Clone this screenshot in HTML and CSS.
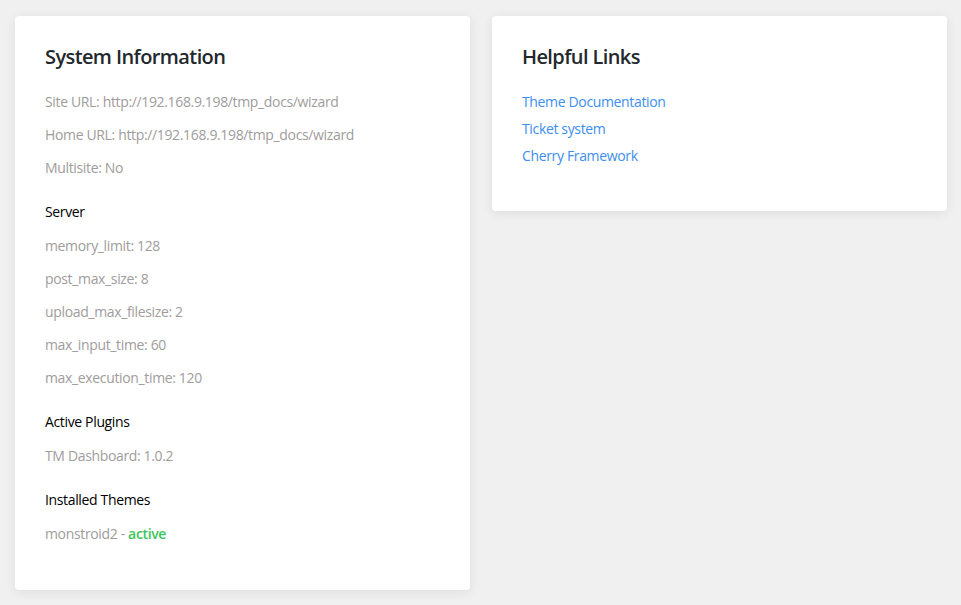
FILE: index.html
```html
<!DOCTYPE html>
<html>
<head>
<meta charset="utf-8">
<link rel="stylesheet" href="styles.css">
</head>
<body>
<div class="wrap">
  <section class="card">
    <h2 class="title">System Information</h2>
    <p class="item">Site URL: http://192.168.9.198/tmp_docs/wizard</p>
    <p class="item">Home URL: http://192.168.9.198/tmp_docs/wizard</p>
    <p class="item">Multisite: No</p>
    <h3 class="sub">Server</h3>
    <p class="item">memory_limit: 128</p>
    <p class="item">post_max_size: 8</p>
    <p class="item">upload_max_filesize: 2</p>
    <p class="item">max_input_time: 60</p>
    <p class="item">max_execution_time: 120</p>
    <h3 class="sub">Active Plugins</h3>
    <p class="item">TM Dashboard: 1.0.2</p>
    <h3 class="sub">Installed Themes</h3>
    <p class="item">monstroid2 - <span class="active">active</span></p>
  </section>
  <section class="card card-links">
    <h2 class="title">Helpful Links</h2>
    <ul class="links">
      <li><a href="#">Theme Documentation</a></li>
      <li><a href="#">Ticket system</a></li>
      <li><a href="#">Cherry Framework</a></li>
    </ul>
  </section>
</div>
</body>
</html>
```
FILE: styles.css
```css
html, body {
  margin: 0;
  padding: 0;
}
body {
  background: #f0f0f0;
  font-family: "Open Sans", "Noto Sans", sans-serif;
  font-size: 14px;
  letter-spacing: -0.35px;
}
.wrap {
  display: flex;
  align-items: flex-start;
  gap: 22px;
  padding: 16px 14px 15px 15px;
}
.card {
  width: 455px;
  box-sizing: border-box;
  background: #fff;
  border-radius: 4px;
  box-shadow: 0 2px 12px rgba(0, 0, 0, 0.08);
  padding: 29px 30px 33px;
}
.title {
  margin: 0 0 23px;
  font-size: 20px;
  line-height: 24px;
  font-weight: 600;
  letter-spacing: -0.6px;
  color: #23282d;
}
.item {
  margin: 0 0 13px;
  line-height: 20px;
  color: #a09c9c;
}
.sub {
  margin: 24px 0 14px;
  font-size: 14px;
  line-height: 20px;
  font-weight: 400;
  color: #000;
}
.active {
  color: #3cc55a;
  font-weight: 600;
}
.links {
  list-style: none;
  margin: 0;
  padding: 0;
  display: flex;
  flex-direction: column;
  gap: 7px;
}
.links li {
  line-height: 20px;
}
.links li:last-child {
  margin-bottom: 12px;
}
.links a {
  color: #3d8ef0;
  text-decoration: none;
}
```
